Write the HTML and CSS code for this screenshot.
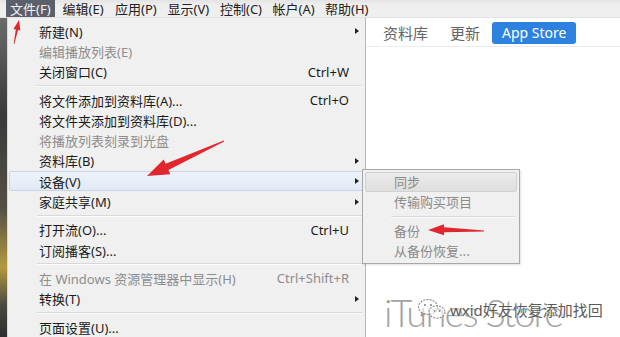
FILE: index.html
```html
<!DOCTYPE html>
<html lang="zh-CN">
<head>
<meta charset="utf-8">
<title>iTunes</title>
<link rel="stylesheet" href="styles.css">
</head>
<body>
<div class="app">
  <div class="menubar">
    <span class="mi mi-active">文件(F)</span>
    <span class="mi">编辑(E)</span>
    <span class="mi">应用(P)</span>
    <span class="mi">显示(V)</span>
    <span class="mi">控制(C)</span>
    <span class="mi">帐户(A)</span>
    <span class="mi">帮助(H)</span>
  </div>
  <div class="main">
    <div class="sidebar"><div class="strip"></div></div>
    <div class="panel">
      <div class="tabs">
        <span class="tab">资料库</span>
        <span class="tab tab-2">更新</span>
        <span class="tab tab-on">App Store</span>
      </div>
      <div class="panel-body"></div>
      <div class="store-title">iTunes Store</div>
    </div>
  </div>

  <div class="dropdown">
    <div class="row"><span class="lbl">新建(N)</span><span class="sc"></span><span class="ar"><i></i></span></div>
    <div class="row dis"><span class="lbl">编辑播放列表(E)</span><span class="sc"></span><span class="ar"></span></div>
    <div class="row"><span class="lbl">关闭窗口(C)</span><span class="sc">Ctrl+W</span><span class="ar"></span></div>
    <div class="sep"></div>
    <div class="row"><span class="lbl">将文件添加到资料库(A)...</span><span class="sc">Ctrl+O</span><span class="ar"></span></div>
    <div class="row"><span class="lbl">将文件夹添加到资料库(D)...</span><span class="sc"></span><span class="ar"></span></div>
    <div class="row dis"><span class="lbl">将播放列表刻录到光盘</span><span class="sc"></span><span class="ar"></span></div>
    <div class="row"><span class="lbl">资料库(B)</span><span class="sc"></span><span class="ar"><i></i></span></div>
    <div class="row hot"><span class="lbl">设备(V)</span><span class="sc"></span><span class="ar"><i></i></span></div>
    <div class="row"><span class="lbl">家庭共享(M)</span><span class="sc"></span><span class="ar"><i></i></span></div>
    <div class="sep"></div>
    <div class="row"><span class="lbl">打开流(O)...</span><span class="sc">Ctrl+U</span><span class="ar"></span></div>
    <div class="row"><span class="lbl">订阅播客(S)...</span><span class="sc"></span><span class="ar"></span></div>
    <div class="sep"></div>
    <div class="row dis"><span class="lbl">在 Windows 资源管理器中显示(H)</span><span class="sc">Ctrl+Shift+R</span><span class="ar"></span></div>
    <div class="row"><span class="lbl">转换(T)</span><span class="sc"></span><span class="ar"><i></i></span></div>
    <div class="sep"></div>
    <div class="row"><span class="lbl">页面设置(U)...</span><span class="sc"></span><span class="ar"></span></div>
  </div>

  <div class="submenu">
    <div class="srow shot">同步</div>
    <div class="srow">传输购买项目</div>
    <div class="ssep"></div>
    <div class="srow">备份</div>
    <div class="srow">从备份恢复...</div>
  </div>

  <div class="watermark">
    <svg class="wx" width="30" height="22" viewBox="0 0 30 22">
      <ellipse cx="11" cy="9" rx="9.5" ry="7.5" fill="#fff" fill-opacity="0.6" stroke="#8a8a8a" stroke-width="1.1" stroke-dasharray="2 1.2"/>
      <path d="M5 14 L4 18 L8.5 15.5" fill="none" stroke="#8a8a8a" stroke-width="1"/>
      <ellipse cx="20" cy="14" rx="8" ry="6.2" fill="#fff" fill-opacity="0.6" stroke="#8a8a8a" stroke-width="1.1" stroke-dasharray="2 1.2"/>
      <circle cx="8" cy="7" r="1.1" fill="#8a8a8a"/>
      <circle cx="14" cy="7" r="1.1" fill="#8a8a8a"/>
      <circle cx="17.5" cy="13" r="0.9" fill="#8a8a8a"/>
      <circle cx="22.5" cy="13" r="0.9" fill="#8a8a8a"/>
    </svg>
    <span class="wx-text">wxid好友恢复添加找回</span>
  </div>

  <svg class="arrows" width="620" height="337" viewBox="0 0 620 337">
    <polygon fill="#e3262d" points="19,20 20.4,30.5 18.1,30 14.3,44 13.7,43.9 15.8,29.5 13.5,29.1"/>
    <polygon fill="#e3262d" points="147,176 170.3,174.2 168.4,170.1 224.2,141.5 223.8,140.5 165.6,163.7 163.7,159.6"/>
    <polygon fill="#e3262d" points="428,230 444.1,235.2 444,232.2 484,231.5 484,230.5 444,227.2 443.9,224.2"/>
  </svg>
</div>
</body>
</html>
```
FILE: styles.css
```css
* { box-sizing: border-box; }
html, body { margin: 0; padding: 0; }
body {
  width: 620px;
  height: 337px;
  overflow: hidden;
  background: #fff;
  font-family: "Noto Sans", "Noto Sans CJK SC", sans-serif;
  font-size: 13px;
  color: #1b1b1b;
}
.app {
  position: relative;
  width: 620px;
  height: 337px;
  display: flex;
  flex-direction: column;
}
.menubar {
  height: 18px;
  flex: none;
  display: flex;
  align-items: stretch;
  padding-left: 6px;
  background: linear-gradient(#e4e4e4, #eeeeee 30%, #efefef);
  border-bottom: 1px solid #e2e2e2;
}
.mi {
  width: 52.5px;
  flex: none;
  padding-left: 4px;
  line-height: 18px;
  white-space: nowrap;
  color: #222;
}
.mi-active {
  width: 49px;
  margin-right: 3.5px;
  background: #5b606b;
  color: #f2f2f2;
}
.main {
  flex: 1;
  display: flex;
  min-height: 0;
}
.sidebar {
  width: 366px;
  flex: none;
  background: #f0f0f0;
}
.strip {
  width: 7px;
  height: 100%;
  background: linear-gradient(#6b6b6b, #3a3a3a 30%, #545047 60%, #b39a3f 78%, #4a4a40 90%, #2e2e2e);
}
.panel {
  flex: 1;
  display: flex;
  flex-direction: column;
  background: #fff;
  min-height: 0;
}
.tabs {
  height: 29px;
  flex: none;
  display: flex;
  align-items: flex-start;
  padding: 4px 0 0 17px;
  border-bottom: 1px solid #ececec;
  font-family: "Noto Sans CJK SC", sans-serif;
}
.tab {
  font-size: 15px;
  line-height: 22px;
  color: #666;
}
.tab-2 { margin-left: 22px; }
.tab-on {
  margin-left: 12px;
  font-family: "Noto Sans", sans-serif;
  font-size: 14px;
  padding: 0 10px;
  background: #2c82de;
  color: #fff;
  border-radius: 3px;
  height: 22px;
}
.panel-body { flex: 1; }
.store-title {
  flex: none;
  height: 44px;
  padding-left: 18px;
  font-family: "Lato", sans-serif;
  font-weight: 300;
  font-size: 38px;
  line-height: 38px;
  letter-spacing: -1.8px;
  color: #a3a3a3;
  white-space: nowrap;
}

/* dropdown menu overlay */
.dropdown {
  position: absolute;
  left: 7px;
  top: 18px;
  width: 359px;
  height: 330px;
  padding: 3px 1px 0 1px;
  background: #f0f0f0;
  border-left: 1px solid #d8d8d8;
  border-right: 1px solid #b9b9b9;
}
.row {
  height: 20.3px;
  display: flex;
  align-items: center;
  padding-left: 29px;
  white-space: nowrap;
  border: 1px solid transparent;
}
.row .lbl { flex: 1; }
.row .sc { text-align: right; }
.row .ar {
  width: 14px;
  flex: none;
  display: flex;
  justify-content: flex-end;
  padding-right: 4px;
}
.row .ar i {
  display: block;
  width: 0;
  height: 0;
  border-top: 3.5px solid transparent;
  border-bottom: 3.5px solid transparent;
  border-left: 4px solid #222;
}
.row.dis { color: #8d8d8d; }
.row.hot {
  background: linear-gradient(#eef3fa, #e2eaf6);
  border-color: #c7d6ec;
  border-radius: 2px;
}
.sep {
  box-sizing: content-box;
  height: 0;
  margin: 3px 2px 3px 28px;
  border-top: 1px solid #d9d9d9;
  border-bottom: 1px solid #fbfbfb;
}

.submenu {
  position: absolute;
  left: 362px;
  top: 169px;
  width: 158px;
  height: 95px;
  padding: 2px;
  background: #f0f0f0;
  border: 1px solid #a8a8a8;
  box-shadow: 1px 1px 2px rgba(0,0,0,0.12);
  font-family: "Noto Sans CJK SC", sans-serif;
}
.srow {
  height: 20.3px;
  line-height: 18px;
  padding-left: 28px;
  color: #8a8a8a;
  white-space: nowrap;
  border: 1px solid transparent;
}
.srow.shot {
  background: linear-gradient(#ebebeb, #dedede);
  border-color: #d2d2d2;
  border-radius: 2px;
}
.ssep {
  box-sizing: content-box;
  height: 0;
  margin: 3px 2px 3px 26px;
  border-top: 1px solid #d9d9d9;
  border-bottom: 1px solid #fbfbfb;
}

.watermark {
  position: absolute;
  left: 417px;
  top: 298px;
  display: flex;
  align-items: center;
  gap: 3px;
}
.wx-text {
  font-family: "Noto Sans", "Noto Sans CJK SC", sans-serif;
  font-size: 15px;
  color: #5a5a5a;
  text-shadow: 0 0 2px #fff;
  white-space: nowrap;
}
.arrows {
  position: absolute;
  left: 0;
  top: 0;
  pointer-events: none;
}
```
